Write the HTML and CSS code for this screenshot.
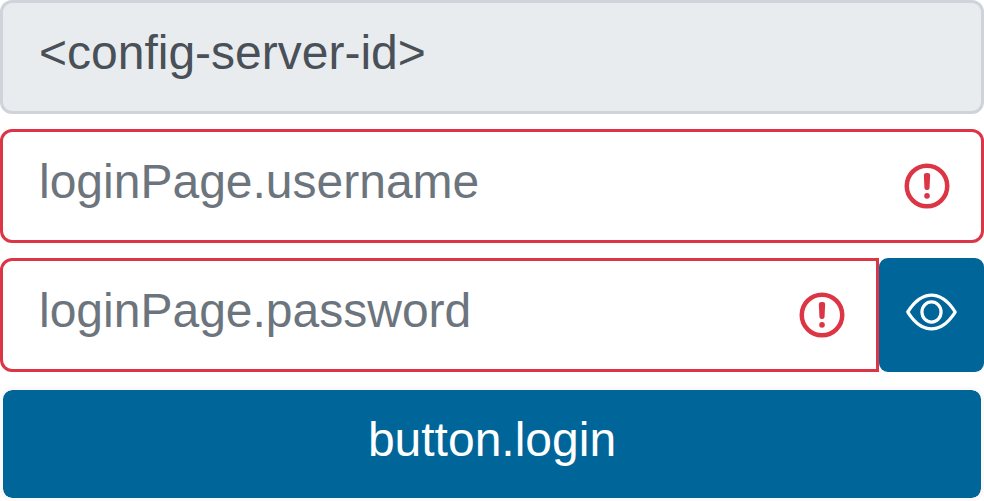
FILE: index.html
```html
<!DOCTYPE html>
<html lang="en">
<head>
<meta charset="utf-8">
<title>Login</title>
<link rel="stylesheet" href="styles.css">
</head>
<body>
<form class="login">
  <div class="field field-disabled"><span class="value">&lt;config-server-id&gt;</span></div>
  <div class="field field-invalid">
    <span class="value">loginPage.username</span>
    <svg class="error-icon" viewBox="0 0 12 12" fill="none" stroke="#dc3545"><circle cx="6" cy="6" r="4.5"/><path stroke-linejoin="round" d="M5.8 3.6h.4L6.070 6.400h-.140z"/><circle cx="6" cy="8.200" r=".620" fill="#dc3545" stroke="none"/></svg>
  </div>
  <div class="group">
    <div class="field field-invalid field-password">
      <span class="value">loginPage.password</span>
      <svg class="error-icon" viewBox="0 0 12 12" fill="none" stroke="#dc3545"><circle cx="6" cy="6" r="4.5"/><path stroke-linejoin="round" d="M5.8 3.6h.4L6.070 6.400h-.140z"/><circle cx="6" cy="8.200" r=".620" fill="#dc3545" stroke="none"/></svg>
    </div>
    <button class="toggle" type="button" aria-label="Show password">
      <svg class="eye" viewBox="0 0 16 16" preserveAspectRatio="none" fill="white"><path d="M16 8s-3-5.5-8-5.5S0 8 0 8s3 5.500 8 5.500S16 8 16 8M1.173 8a13 13 0 0 1 1.660-2.043C4.120 4.668 5.880 3.500 8 3.500s3.879 1.168 5.168 2.457A13 13 0 0 1 14.828 8q-.086.130-.195.288c-.335.480-.830 1.120-1.465 1.755C11.879 11.332 10.119 12.500 8 12.500s-3.879-1.168-5.168-2.457A13 13 0 0 1 1.172 8z"/><path d="M8 5.500a2.500 2.500 0 1 0 0 5 2.500 2.500 0 0 0 0-5M4.500 8a3.500 3.500 0 1 1 7 0 3.500 3.500 0 0 1-7 0"/></svg>
    </button>
  </div>
  <button class="submit" type="button">button.login</button>
</form>
</body>
</html>
```
FILE: styles.css
```css
* { box-sizing: border-box; }
body { margin: 0; background: #fff; overflow: hidden; font-family: "Liberation Sans", Arial, sans-serif; font-size: 48px; line-height: 72px; }
.login { display: flex; flex-direction: column; }
.field { display: flex; align-items: center; justify-content: space-between; height: 114px; margin-bottom: 15px; padding: 0 27px 0 36px; border: 3px solid #ced4da; border-radius: 12px; color: #6c757d; }
.value { margin-top: -8px; }
.field-disabled { background: #e9ecef; color: #495057; }
.field-invalid { border-color: #dc3545; }
.error-icon { width: 54px; height: 54px; }
.group { display: flex; height: 114px; margin-bottom: 15px; }
.field-password { flex: 1; border-radius: 12px 0 0 12px; }
.toggle { display: flex; align-items: center; justify-content: center; width: 105px; padding: 0; border: 0; border-radius: 9px; background: #006699; }
.eye { width: 51px; height: 54px; margin-top: -6px; }
.submit { height: 114px; padding: 0 0 8px; border: 3px solid #fafafa; border-radius: 12px; background: #006699; background-clip: padding-box; color: #fff; font: inherit; }
```
